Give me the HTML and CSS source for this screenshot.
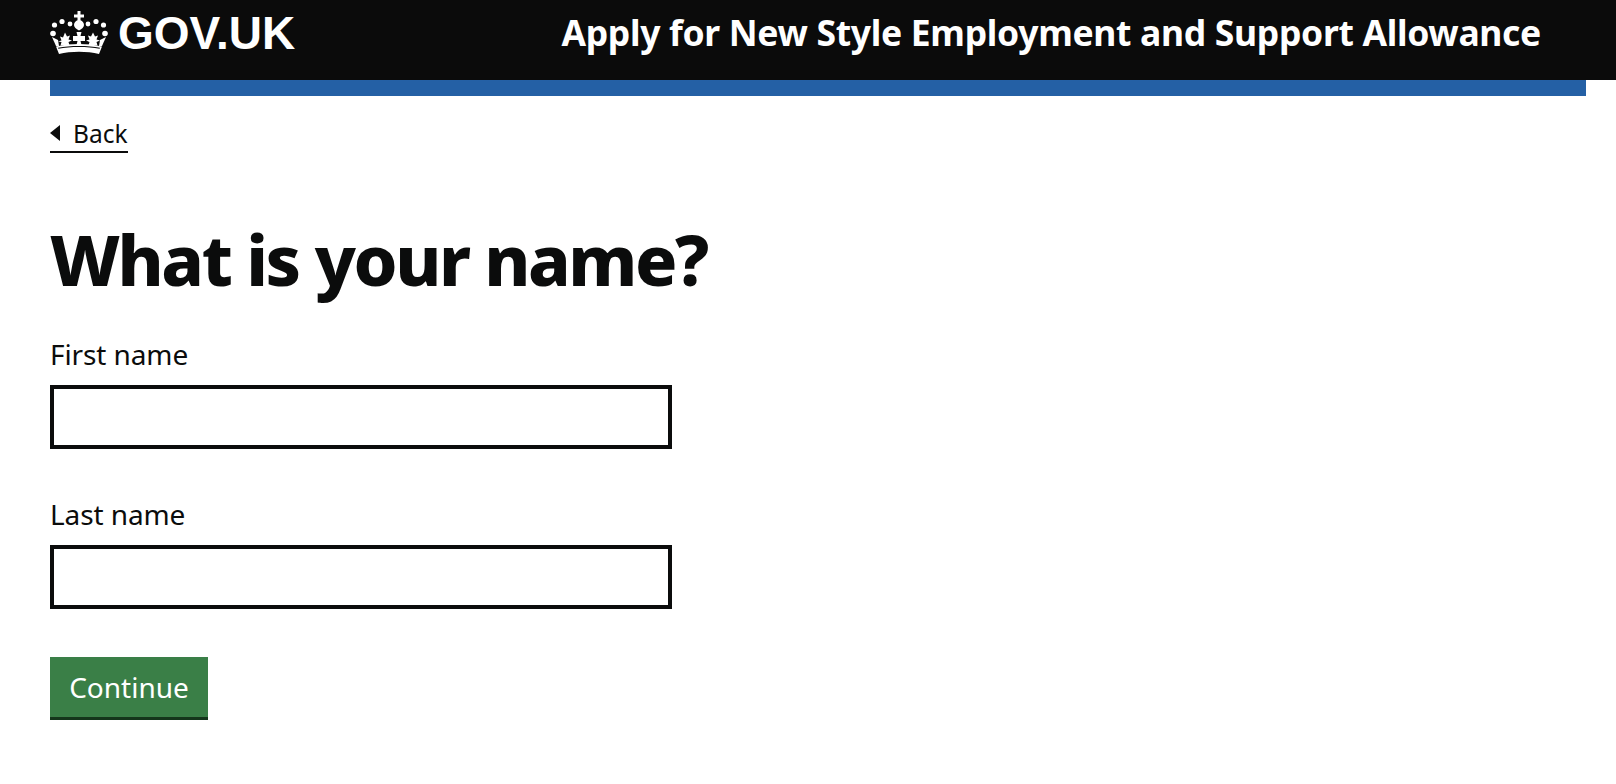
FILE: index.html
```html
<!DOCTYPE html>
<html lang="en">

<head>
    <meta charset="UTF-8">
    <meta name="viewport" content="width=device-width, initial-scale=1.0">
    <title>What is your name?</title>
    <link rel="stylesheet" href="styles.css">
</head>

<body>
    <header class="header">
        <a class="logo" href="#">
            <svg class="crown" viewBox="0 0 58 43" aria-hidden="true" fill="#fff">
                <!-- cross and orb on top -->
                <path d="M27.500 0h3v3.500h3.500v3h-3.500v2.700c2.200.9 3.500 2.800 3.500 4.800 0 2.200-2 4-5 5.500-3-1.500-5-3.300-5-5.500 0-2 1.300-3.900 3.500-4.800V6.500H24v-3h3.500z"/>
                <!-- pearls -->
                <circle cx="20" cy="13" r="2.400"/>
                <circle cx="38" cy="13" r="2.400"/>
                <circle cx="12" cy="10.500" r="2.600"/>
                <circle cx="46" cy="10.500" r="2.600"/>
                <circle cx="4.500" cy="14" r="2.600"/>
                <circle cx="53.500" cy="14" r="2.600"/>
                <circle cx="3" cy="22.500" r="2.800"/>
                <circle cx="55" cy="22.500" r="2.800"/>
                <!-- centre cross -->
                <path d="M26.500 21h5l-1 4h4.500v5h-4.500l1 4h-5l1-4H23v-5h4.500z"/>
                <!-- fleurs -->
                <path d="M15 21.500l2 4 3-1-1.500 4 3.500 1-3.500 1.500 1 3.500H10.500l1-3.500L8 30.500l3.500-1-1.500-4 3 1z"/>
                <path d="M43 21.500l2 4 3-1-1.500 4 3.500 1-3.500 1.500 1 3.500h-9l1-3.500-3.500-1.500 3.500-1-1.500-4 3 1z"/>
                <!-- side points -->
                <path d="M2 26l6 3 1 6H6z"/>
                <path d="M56 26l-6 3-1 6h3z"/>
                <!-- band -->
                <path d="M6 35.500C13 33.800 21 33 29 33s16 .8 23 2.500L49 43c-6-1.500-13-2.200-20-2.200S15 41.500 9 43z"/>
                <path fill="#0b0b0b" d="M8 36.800C14 35.500 21 35 29 35s15 .5 21 1.800l-.4 1C43.500 36.600 36.500 36 29 36s-14.500.6-20.600 1.800z"/>
            </svg>
            <span>GOV.UK</span>
        </a>
        <a class="service-name" href="#">Apply for New Style Employment and Support Allowance</a>
    </header>

    <div class="wrapper">
        <div class="blue-bar"></div>

        <a class="back-link" href="#">Back</a>

        <main>
            <h1 class="title">What is your name?</h1>
            <form class="form">
                <div class="form-group">
                    <label class="label" for="first-name">First name</label>
                    <input class="input" id="first-name" type="text">
                </div>
                <div class="form-group">
                    <label class="label" for="last-name">Last name</label>
                    <input class="input" id="last-name" type="text">
                </div>
                <button class="button" type="button">Continue</button>
            </form>
        </main>
    </div>
</body>

</html>
```

FILE: styles.css
```css
* {
    margin: 0;
    padding: 0;
    box-sizing: border-box;
}

body {
    font-family: "Noto Sans", "Liberation Sans", sans-serif;
    color: #0b0c0c;
    background: #fff;
}

a {
    color: inherit;
    text-decoration: none;
}

.header {
    display: flex;
    justify-content: space-between;
    align-items: center;
    height: 80px;
    padding: 0 50px 14px;
    background: #0b0b0b;
    color: #fff;
}

.logo {
    display: flex;
    align-items: center;
    gap: 10px;
    font-family: "Liberation Sans", Arial, sans-serif;
    font-size: 46px;
    font-weight: bold;
    line-height: 1;
}

.crown {
    width: 58px;
    height: 43px;
    margin-bottom: 2px;
}

.service-name {
    margin-right: 25px;
    font-size: 35.500px;
    font-weight: 700;
    letter-spacing: -0.32px;
    line-height: 1;
}

.wrapper {
    padding: 0 30px 0 50px;
}

.blue-bar {
    height: 16px;
    background: #2460a5;
}

.back-link {
    display: inline-flex;
    align-items: center;
    gap: 13px;
    margin-top: 21px;
    height: 36px;
    padding-bottom: 2px;
    font-size: 24.500px;
    border-bottom: 2px solid #0b0c0c;
}

.back-link::before {
    content: "";
    border-top: 8px solid transparent;
    border-bottom: 8px solid transparent;
    border-right: 10px solid #0b0c0c;
}

.title {
    margin-top: 61px;
    font-size: 70px;
    font-weight: 800;
    letter-spacing: -2.400px;
    line-height: 90px;
}

.form {
    padding-top: 32px;
}

.form-group {
    margin-bottom: 47px;
}

.label {
    display: block;
    margin-bottom: 13px;
    font-size: 28px;
    letter-spacing: -0.1px;
    line-height: 36px;
}

.input {
    display: block;
    width: 622px;
    height: 64px;
    border: 4px solid #0b0c0c;
    background: #fff;
    font-size: 28px;
}

.button {
    display: block;
    width: 158px;
    height: 63px;
    margin-top: 48px;
    border: 0;
    border-bottom: 3px solid #14361b;
    background: #3a7f47;
    color: #fff;
    font-family: inherit;
    font-size: 28px;
    line-height: 1;
}
```
